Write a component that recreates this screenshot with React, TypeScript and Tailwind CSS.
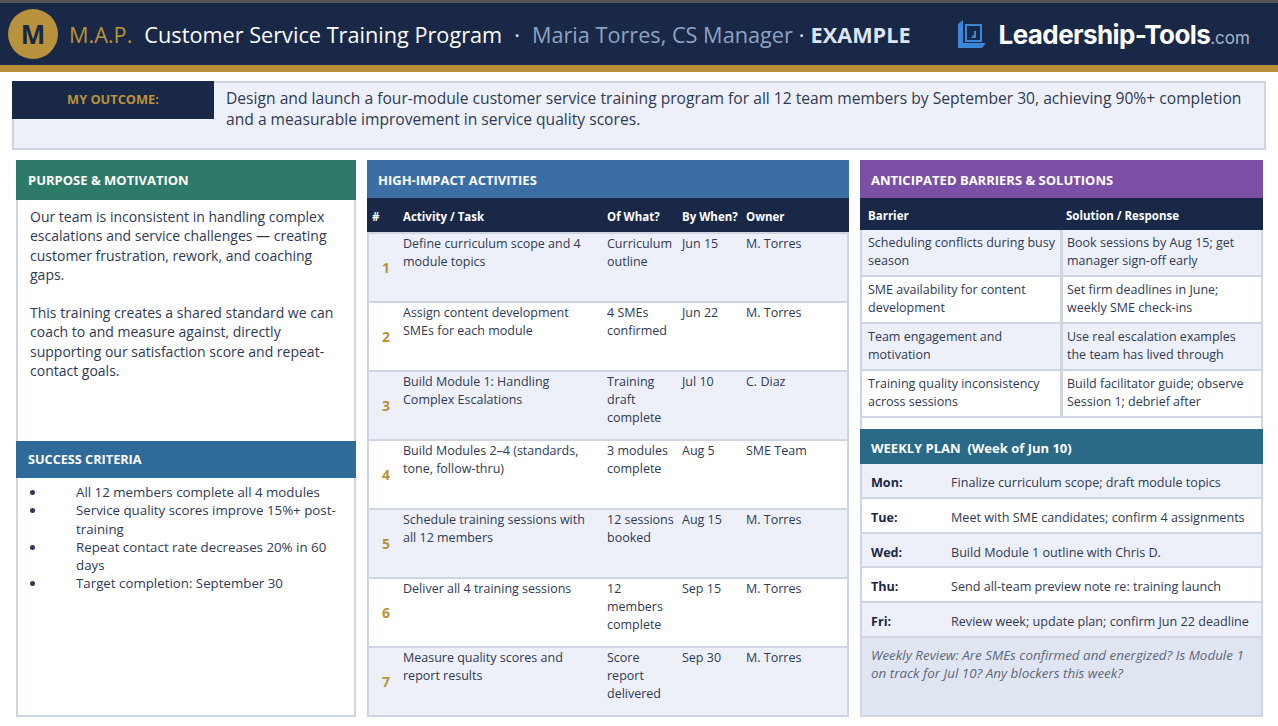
const activities = [
  { task: 'Define curriculum scope and 4 module topics', what: 'Curriculum outline', when: 'Jun 15', owner: 'M. Torres' },
  { task: 'Assign content development SMEs for each module', what: '4 SMEs confirmed', when: 'Jun 22', owner: 'M. Torres' },
  { task: 'Build Module 1: Handling Complex Escalations', what: 'Training draft complete', when: 'Jul 10', owner: 'C. Diaz' },
  { task: 'Build Modules 2–4 (standards, tone, follow-thru)', what: '3 modules complete', when: 'Aug 5', owner: 'SME Team' },
  { task: 'Schedule training sessions with all 12 members', what: '12 sessions booked', when: 'Aug 15', owner: 'M. Torres' },
  { task: 'Deliver all 4 training sessions', what: '12 members complete', when: 'Sep 15', owner: 'M. Torres' },
  { task: 'Measure quality scores and report results', what: 'Score report delivered', when: 'Sep 30', owner: 'M. Torres' },
]

const barriers = [
  ['Scheduling conflicts during busy season', 'Book sessions by Aug 15; get manager sign-off early'],
  ['SME availability for content development', 'Set firm deadlines in June; weekly SME check-ins'],
  ['Team engagement and motivation', 'Use real escalation examples the team has lived through'],
  ['Training quality inconsistency across sessions', 'Build facilitator guide; observe Session 1; debrief after'],
]

const plan = [
  ['Mon:', 'Finalize curriculum scope; draft module topics'],
  ['Tue:', 'Meet with SME candidates; confirm 4 assignments'],
  ['Wed:', 'Build Module 1 outline with Chris D.'],
  ['Thu:', 'Send all-team preview note re: training launch'],
  ['Fri:', 'Review week; update plan; confirm Jun 22 deadline'],
]

const criteria = [
  'All 12 members complete all 4 modules',
  'Service quality scores improve 15%+ post-training',
  'Repeat contact rate decreases 20% in 60 days',
  'Target completion: September 30',
]

const Header = () => (
  <header className="flex h-[72px] items-center border-t-[3px] border-b-[7px] border-t-[#555555] border-b-[#b58e3a] bg-[#1a2847]">
    <div className="ml-[8px] flex h-[50px] w-[50px] shrink-0 items-center justify-center rounded-full bg-[#b8923c] text-[26px] font-bold text-[#1a2847]">M</div>
    <p className="ml-[11px] whitespace-nowrap pt-[2px] text-[21.7px] text-white">
      <span className="text-[#b8923c]">M.A.P.</span>
      <span className="ml-[12px]">Customer Service Training Program</span>
      <span className="ml-[12px] text-[#dfe5f0]">·</span>
      <span className="ml-[12px] text-[#8ea3c4]">Maria Torres, CS Manager</span>
      <span className="ml-[6px] text-[#dfe5f0]">·</span>
      <span className="ml-[6px] font-bold text-[#dfe5f0]">EXAMPLE</span>
    </p>
    <svg viewBox="0 0 28 28" className="ml-[47px] h-[28px] w-[28px] shrink-0">
      <path d="M0 4 L5 0 V23 H28 L24 28 H0 Z" fill="#3b86d6" />
      <path fillRule="evenodd" d="M7 4 H24 V22 H7 Z M9 6 V20 H22 V6 Z" fill="#3b86d6" />
      <path d="M16 11 H18 V18 H13 L15 15 H16 Z" fill="#3b86d6" />
    </svg>
    <p className="ml-[13px] whitespace-nowrap font-['Inter',sans-serif] text-[26px] font-bold tracking-[-0.6px] text-white">
      Leadership-Tools<span className="text-[17px] font-normal tracking-normal text-[#a9b3c6]">.com</span>
    </p>
  </header>
)

const Outcome = () => (
  <section className="mx-[12px] mt-[9px] flex h-[69px] border-2 border-[#d0d5e2] bg-[#edf0f8]">
    <div className="-mt-[2px] -ml-[2px] flex h-[38px] w-[202px] shrink-0 items-center justify-center bg-[#1a2847] text-[12.8px] font-bold text-[#b8923c]">
      MY OUTCOME:
    </div>
    <p className="ml-3 mr-4 pt-[5px] text-[15.63px] leading-[21px] text-[#2f3a52]">
      Design and launch a four-module customer service training program for all 12 team members by September 30, achieving 90%+ completion and a measurable improvement in service quality scores.
    </p>
  </section>
)

const Activities = () => (
  <section className="flex flex-col">
    <h2 className="flex h-[38px] items-center bg-[#3b6ea5] pl-[11px] pt-[4px] text-[13px] font-bold text-white">HIGH-IMPACT ACTIVITIES</h2>
    <div className="grid h-[34px] grid-cols-[36px_204px_75px_64px_1fr] items-center bg-[#1a2847] pt-[3px] text-[11.5px] font-bold text-white">
      <span className="pl-[5px]">#</span>
      <span>Activity / Task</span>
      <span>Of What?</span>
      <span>By When?</span>
      <span>Owner</span>
    </div>
    <div className="flex flex-1 flex-col border-x-2 border-t-2 border-[#d0d5e2]">
      {activities.map((a, i) => (
        <div
          key={a.task}
          className={`grid flex-1 grid-cols-[34px_204px_75px_64px_1fr] border-b-2 border-[#d0d5e2] pt-[1px] text-[12.5px] leading-[18px] text-[#2f3a52] ${i % 2 ? 'bg-white' : 'bg-[#edf0f8]'}`}
        >
          <span className="flex items-center justify-center text-[14px] font-bold text-[#b8923c]">{i + 1}</span>
          <span className="pr-3">{a.task}</span>
          <span className="pr-1">{a.what}</span>
          <span>{a.when}</span>
          <span>{a.owner}</span>
        </div>
      ))}
    </div>
  </section>
)

const Barriers = () => (
  <div className="flex h-[269px] flex-col">
    <h2 className="flex h-[38px] shrink-0 items-center bg-[#7b4fa6] pl-[11px] pt-[4px] text-[13px] font-bold text-white">ANTICIPATED BARRIERS &amp; SOLUTIONS</h2>
    <div className="grid h-[32px] shrink-0 grid-cols-[198px_1fr] items-center bg-[#1a2847] pl-2 pt-[3px] text-[11.5px] font-bold text-white">
      <span>Barrier</span>
      <span>Solution / Response</span>
    </div>
    <div className="flex flex-1 flex-col border-x-2 border-[#d0d5e2]">
      {barriers.map((b, i) => (
        <div key={b[0]} className="grid h-[47.1px] grid-cols-[198px_1fr] gap-[3px] border-b-2 border-[#d0d5e2] bg-[#d0d5e2] text-[12.5px] leading-[18px] text-[#2f3a52]">
          <p className={`pl-[6px] pt-[4px] ${i % 2 ? 'bg-white' : 'bg-[#edf0f8]'}`}>{b[0]}</p>
          <p className={`pl-[4px] pr-3 pt-[4px] ${i % 2 ? 'bg-white' : 'bg-[#edf0f8]'}`}>{b[1]}</p>
        </div>
      ))}
    </div>
  </div>
)

const WeeklyPlan = () => (
  <div className="flex flex-1 flex-col">
    <h2 className="flex h-[35px] shrink-0 items-center bg-[#2a6a87] pl-[11px] pt-[4px] text-[13px] font-bold text-white">WEEKLY PLAN&nbsp;&nbsp;(Week of Jun 10)</h2>
    <div className="flex flex-1 flex-col border-x-2 border-b-2 border-[#d0d5e2]">
      {plan.map((p, i) => (
        <div key={p[0]} className={`flex h-[34.8px] shrink-0 items-center border-b-2 border-[#d0d5e2] pl-[9px] pt-[6px] text-[12.6px] text-[#2f3a52] ${i % 2 ? 'bg-white' : 'bg-[#edf0f8]'}`}>
          <span className="w-[80px] shrink-0 font-bold text-[#1a2847]">{p[0]}</span>
          <span className="whitespace-nowrap">{p[1]}</span>
        </div>
      ))}
      <p className="flex-1 bg-[#e0e6f1] pl-[9px] pr-2 pt-[8px] text-[13.4px] italic leading-[18px] text-[#5c667c]">
        Weekly Review: Are SMEs confirmed and energized? Is Module 1 on track for Jul 10? Any blockers this week?
      </p>
    </div>
  </div>
)

const LeftColumn = () => (
  <section className="flex flex-col border-x-2 border-b-2 border-[#d0d5e2] bg-white">
    <h2 className="-mx-[2px] flex h-[40px] items-center bg-[#2e7a68] pl-[12px] pt-[1px] text-[13px] font-bold text-white">PURPOSE &amp; MOTIVATION</h2>
    <div className="h-[241px] pl-[12px] pr-3 pt-[7px] text-[14px] leading-[19.3px] text-[#2f3a52]">
      <p>Our team is inconsistent in handling complex escalations and service challenges — creating customer frustration, rework, and coaching gaps.</p>
      <p className="mt-[19px]">This training creates a shared standard we can coach to and measure against, directly supporting our satisfaction score and repeat-contact goals.</p>
    </div>
    <h2 className="-mx-[2px] flex h-[37px] items-center bg-[#2e6b9a] pl-[12px] pt-[1px] text-[12.7px] font-bold text-white">SUCCESS CRITERIA</h2>
    <ul className="pl-[12px] pr-3 pt-[5px] text-[13.3px] leading-[18.3px] text-[#2f3a52]">
      {criteria.map(c => (
        <li key={c} className="flex">
          <span className="mt-[7px] mr-[41px] h-[5px] w-[5px] shrink-0 rounded-full bg-[#2f3a52]" />
          <span>{c}</span>
        </li>
      ))}
    </ul>
  </section>
)

export default function App() {
  return (
    <div className="h-[726px] w-[1278px] overflow-hidden bg-white font-['Open_Sans',sans-serif]">
      <Header />
      <Outcome />
      <main className="mx-4 mt-[10px] grid h-[557px] grid-cols-[340px_482px_403px] gap-[11px]">
        <LeftColumn />
        <Activities />
        <section className="flex flex-col">
          <Barriers />
          <WeeklyPlan />
        </section>
      </main>
    </div>
  )
}
